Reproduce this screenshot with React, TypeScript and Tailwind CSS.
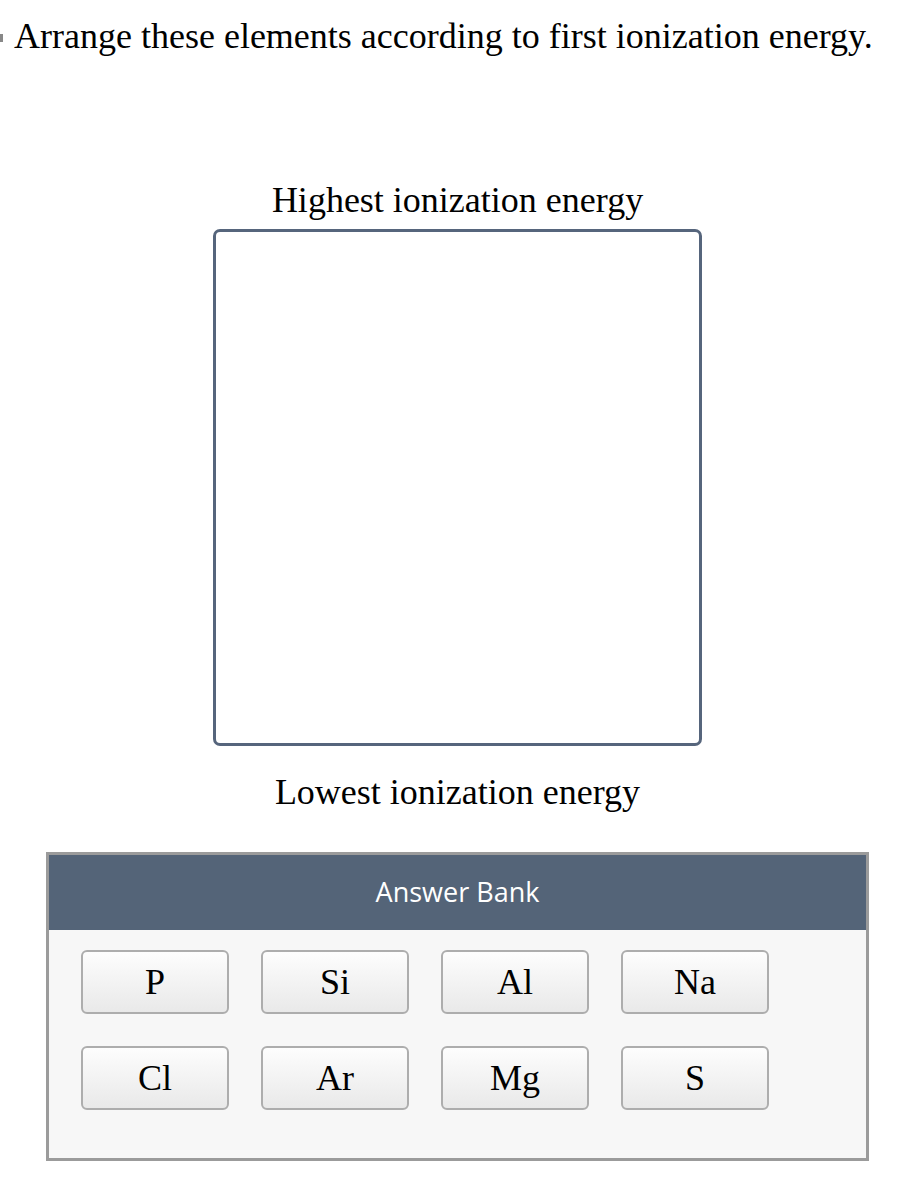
import React from "react";

const serif = { fontFamily: '"Liberation Serif", "Times New Roman", serif' };

const elements = ["P", "Si", "Al", "Na", "Cl", "Ar", "Mg", "S"];

function Tile({ label }: { label: string }) {
  return (
    <div
      className="flex h-[64px] w-[148px] items-center justify-center rounded-[6px] border-2 border-[#adadad] bg-gradient-to-b from-[#fdfdfd] to-[#e9e9e9] text-[36px] leading-none text-black"
      style={serif}
    >
      {label}
    </div>
  );
}

export default function App() {
  return (
    <div className="relative min-h-[1190px] w-[898px] bg-white text-black" style={serif}>
      <div className="absolute left-0 top-[34px] h-[8px] w-[3px] bg-[#888]" />
      <div className="pl-[14px] pt-[14px] text-[36px] leading-[44px]">
        Arrange these elements according to first ionization energy.
      </div>

      <div className="ml-[46px] w-[823px]">
        <div className="mt-[122px] text-center text-[36px] leading-[40px]">Highest ionization energy</div>
        <div className="mx-auto mt-[9px] h-[517px] w-[489px] rounded-[7px] border-[3px] border-[#56657c] bg-white" />
        <div className="mt-[26px] text-center text-[36px] leading-[40px]">Lowest ionization energy</div>

        <div className="mt-[40px] h-[309px] border-[3px] border-[#9b9b9b] bg-[#f7f7f7]">
          <div
            className="flex h-[75px] items-center justify-center bg-[#546478] text-[27px] font-medium text-white"
            style={{ fontFamily: '"Open Sans", "Noto Sans", sans-serif' }}
          >
            Answer Bank
          </div>
          <div className="grid grid-cols-[repeat(4,148px)] gap-x-[32px] gap-y-[32px] pl-[32px] pt-[20px]">
            {elements.map((e) => (
              <Tile key={e} label={e} />
            ))}
          </div>
        </div>
      </div>
    </div>
  );
}
